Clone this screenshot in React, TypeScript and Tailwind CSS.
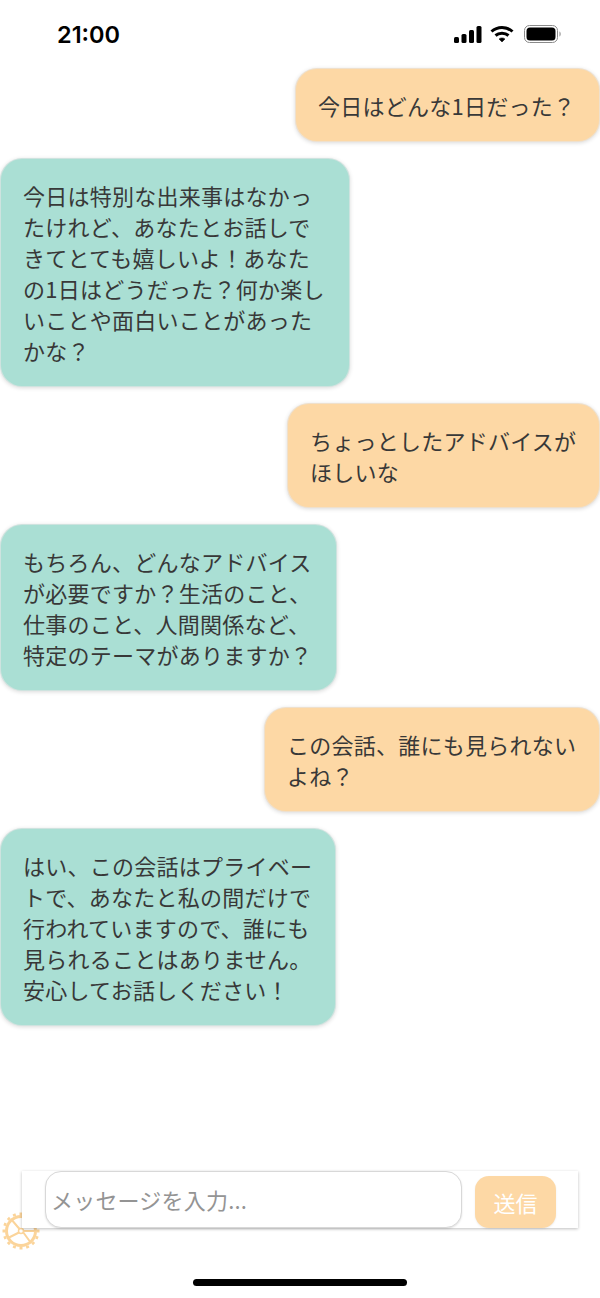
const jp = `font-["Noto_Sans_CJK_JP","Noto_Sans",sans-serif]`;

type Msg = { from: "user" | "bot"; lines: string[]; width: string };

const messages: Msg[] = [
  { from: "user", lines: ["今日はどんな1日だった？"], width: "w-[305px]" },
  {
    from: "bot",
    lines: ["今日は特別な出来事はなかっ", "たけれど、あなたとお話しで", "きてとても嬉しいよ！あなた", "の1日はどうだった？何か楽し", "いことや面白いことがあった", "かな？"],
    width: "w-[350px]",
  },
  { from: "user", lines: ["ちょっとしたアドバイスが", "ほしいな"], width: "w-[313px]" },
  {
    from: "bot",
    lines: ["もちろん、どんなアドバイス", "が必要ですか？生活のこと、", "仕事のこと、人間関係など、", "特定のテーマがありますか？"],
    width: "w-[337px]",
  },
  { from: "user", lines: ["この会話、誰にも見られない", "よね？"], width: "w-[336px]" },
  {
    from: "bot",
    lines: ["はい、この会話はプライベー", "トで、あなたと私の間だけで", "行われていますので、誰にも", "見られることはありません。", "安心してお話しください！"],
    width: "w-[336px]",
  },
];

function Bubble({ msg }: { msg: Msg }) {
  const color = msg.from === "user" ? "bg-[#fdd8a5] self-end" : "bg-[#aadfd4] self-start";
  return (
    <div className={`${color} ${msg.width} rounded-[22px] border border-[#e6e6e6]/60 px-[22px] py-[20.5px] text-[22px] leading-[31px] tracking-[0.25px] text-[#383838] whitespace-nowrap shadow-[0_1px_4px_rgba(0,0,0,0.15)]`}>
      {msg.lines.map((line) => (
        <div key={line}>{line}</div>
      ))}
    </div>
  );
}

function Gear() {
  const teeth = Array.from({ length: 16 }, (_, i) => (i * 360) / 16);
  return (
    <svg viewBox="0 0 40 40" className="absolute left-[1px] top-[1211px] h-[40px] w-[40px]" fill="none" stroke="#fbd49a">
      <circle cx="20" cy="20" r="14.5" strokeWidth="3" />
      {teeth.map((a) => (
        <line key={a} x1="20" y1="4" x2="20" y2="1.5" strokeWidth="3" transform={`rotate(${a} 20 20)`} />
      ))}
      <circle cx="20" cy="20" r="2.5" strokeWidth="1.5" />
      <path d="M18.5 18 L10 8 M18 21.5 L7 27 M22 21 L30 32 M23 20 H35" strokeWidth="2" />
    </svg>
  );
}

export default function App() {
  return (
    <div className={`relative h-[1298px] w-[600px] overflow-hidden bg-white ${jp}`}>
      <div className="flex h-[68px] items-start justify-between pl-[57px] pr-[38px] pt-[21px]">
        <span className="font-['Inter',sans-serif] text-[23.5px] font-semibold leading-[28px] text-black">21:00</span>
        <div className="flex items-center pt-[4px]">
          <svg viewBox="0 0 28 17" className="h-[17px] w-[28px]" fill="#000">
            <rect x="0" y="11" width="5" height="6" rx="1.5" />
            <rect x="7.5" y="8" width="5" height="9" rx="1.5" />
            <rect x="15" y="4" width="5" height="13" rx="1.5" />
            <rect x="22.5" y="0" width="5" height="17" rx="1.5" />
          </svg>
          <svg viewBox="0 0 24 18" className="ml-[8px] h-[18px] w-[24px]" fill="none" stroke="#000" strokeWidth="3">
            <path d="M1.5 6.5 C7.5 1 16.5 1 22.5 6.5" />
            <path d="M5.5 10.5 C9 7.5 15 7.5 18.5 10.5" />
            <path d="M9 14 L12 17 L15 14 C13.5 12.5 10.5 12.5 9 14 Z" fill="#000" strokeWidth="0.5" />
          </svg>
          <svg viewBox="0 0 38 18" className="ml-[10px] h-[18px] w-[38px]">
            <rect x="0.5" y="0.5" width="33" height="17" rx="5" fill="none" stroke="#8a8a8a" />
            <rect x="2.5" y="2.5" width="29" height="13" rx="3.5" fill="#000" />
            <path d="M35.5 6.5 C37 7 37 11 35.5 11.5 Z" fill="#8a8a8a" />
          </svg>
        </div>
      </div>

      <div className="flex flex-col gap-[16px]">
        {messages.map((m) => (
          <Bubble key={m.lines[0]} msg={m} />
        ))}
      </div>

      <Gear />

      <div className="absolute left-[22px] top-[1171px] flex h-[57px] w-[556px] items-start bg-white pl-[23px] shadow-[0_1px_3px_rgba(0,0,0,0.25)]">
        <div className="flex h-[57px] w-[417px] items-center rounded-[16px] border border-[#d8d8d8] bg-white pl-[5px] text-[22px] tracking-[0.2px] text-[#949494] shadow-[0_1px_2px_rgba(0,0,0,0.12)]">
          メッセージを入力...
        </div>
        <div className="ml-[13px] mt-[5px] flex h-[52px] w-[81px] items-center justify-center rounded-[14px] bg-[#fdd8a5] text-[22px] text-white shadow-[0_1px_2px_rgba(0,0,0,0.08)]">
          送信
        </div>
      </div>

      <div className="absolute left-[193px] top-[1279px] h-[7px] w-[214px] rounded-full bg-black" />
    </div>
  );
}
